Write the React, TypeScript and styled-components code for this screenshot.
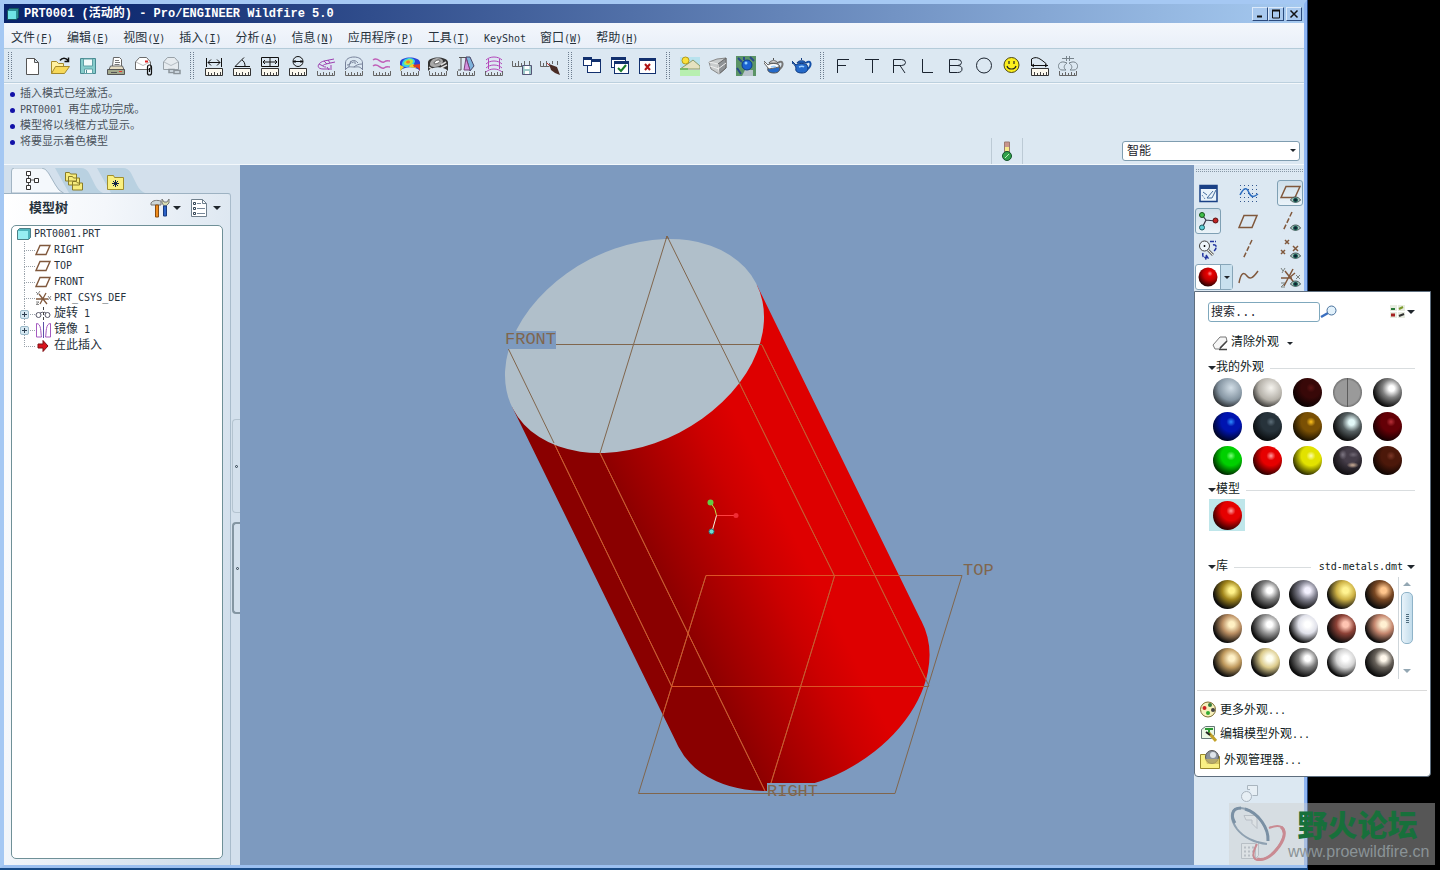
import React from "react";
import styled, { createGlobalStyle, css } from "styled-components";

const CJK = '"Liberation Mono", "Noto Sans CJK SC", monospace';
const MONO = '"DejaVu Sans Mono", "Noto Sans CJK SC", monospace';

const GlobalStyle = createGlobalStyle`
  *, *::before, *::after { box-sizing: border-box; }
  html, body { margin: 0; background: #000; }
  body { font: 12px/16px ${CJK}; color: #27323c; }
  button { font: inherit; color: inherit; background: none; border: 0; padding: 0; margin: 0; cursor: pointer; }
  svg { display: block; flex: none; }
  ul { list-style: none; margin: 0; padding: 0; }
`;

/* ---------- text ---------- */

const Latin = styled.span`
  font-family: ${MONO};
  font-size: 10px;
`;

function Mixed({ text }: { text: string }) {
  return (
    <>
      {text.split(/([\x20-\x7e]+)/).map((run, i) =>
        run === "" ? null : i % 2 ? <Latin key={i}>{run}</Latin> : <span key={i}>{run}</span>
      )}
    </>
  );
}

/* ---------- window frame ---------- */

const Desktop = styled.div`
  position: relative;
  display: flex;
  min-height: 100vh;
  padding-right: 132px;
  background: #000;
`;

const Frame = styled.main`
  flex: 1;
  min-width: 0;
  display: flex;
  border-right: 1px solid #23467e;
  border-bottom: 2px solid #174a86;
`;

const AppWindow = styled.div`
  flex: 1;
  min-width: 0;
  display: flex;
  flex-direction: column;
  border: 4px solid #a5c8f3;
  border-right: 3px solid #8db4f2;
  border-bottom: 3px solid #9cc0f0;
  background: #dce8f2;
`;

const TitleBar = styled.header`
  display: flex;
  align-items: center;
  height: 19px;
  padding: 0 2px 0 3px;
  background: linear-gradient(90deg, #0a246a 0%, #0f2a70 8%, #a6caf0 100%);
`;

const TitleText = styled.h1`
  flex: 1;
  margin: 0 0 0 5px;
  font: bold 12px/18px ${CJK};
  color: #fff;
  white-space: pre;
`;

const TitleButtons = styled.div`
  display: flex;
`;

const TitleButton = styled.button<{ $gap?: boolean }>`
  width: 16px;
  height: 14px;
  display: grid;
  place-items: center;
  margin-left: ${(p) => (p.$gap ? 2 : 0)}px;
  background: #a9c9ee;
  border: 1px solid #dceafa;
  border-right-color: #2b4a7c;
  border-bottom-color: #2b4a7c;
`;

const MenuBar = styled.nav`
  display: flex;
  gap: 14px;
  height: 26px;
  padding: 6px 7px 0;
  background: linear-gradient(#f3f7fc, #e9eff8);
  border-bottom: 1px solid #b4cbd9;
`;

const MenuButton = styled.button`
  display: flex;
  align-items: center;
  white-space: pre;
`;

const ToolBar = styled.div`
  display: flex;
  align-items: center;
  height: 34px;
  border-bottom: 1px solid #bcd0de;
  box-shadow: 0 1px 0 #f4f8fc;
`;

const Grip = styled.span`
  flex: none;
  width: 14px;
  height: 28px;
  background: conic-gradient(#6c7c8e 90deg, transparent 0) 3px 0 / 2px 2px repeat-y,
    conic-gradient(#6c7c8e 90deg, transparent 0) 6px 0 / 2px 2px repeat-y;
`;

const ToolButton = styled.button`
  width: 28px;
  height: 28px;
  display: grid;
  place-items: center;
`;

const MessageArea = styled.section`
  display: flex;
  align-items: flex-end;
  height: 82px;
  border-bottom: 1px solid #f3f8fc;
`;

const MessageList = styled.ul`
  flex: 1;
  align-self: flex-start;
  padding: 3px 0 0 6px;
  font-size: 11px;
  color: #4a535c;
`;

const Message = styled.li`
  display: flex;
  align-items: center;
  height: 16px;
  white-space: pre;
  &::before {
    content: "";
    width: 5px;
    height: 5px;
    margin-right: 5px;
    border-radius: 50%;
    background: #1212a8;
  }
`;

const StatusCell = styled.div`
  width: 32px;
  height: 26px;
  margin-right: 99px;
  display: grid;
  place-items: center;
  border-left: 1px solid #bccad5;
  border-right: 1px solid #bccad5;
`;

const FilterBox = styled.label`
  position: relative;
  width: 178px;
  margin: 0 4px 3px 0;
`;

const FilterSelect = styled.select`
  appearance: none;
  display: block;
  width: 100%;
  height: 20px;
  padding: 1px 4px 0;
  font: 12px/16px ${CJK};
  color: #1d242b;
  background: #fff;
  border: 1px solid #7f9db0;
  border-radius: 3px;
`;

const Caret = styled.span<{ $overlay?: boolean; $size?: number }>`
  flex: none;
  width: 0;
  height: 0;
  border: ${(p) => p.$size ?? 4}px solid transparent;
  border-top-color: #20262c;
  border-bottom: 0;
  ${(p) => p.$overlay && css`
    position: absolute;
    right: 4px;
    top: 8px;
    pointer-events: none;
  `}
`;

/* ---------- body: tree panel, viewport, tools ---------- */

const Body = styled.div`
  flex: 1;
  display: flex;
  min-height: 700px;
`;

const SidePanel = styled.aside`
  width: 236px;
  flex: none;
  display: flex;
  background: #d3e0ec;
`;

const SideMain = styled.div`
  flex: 1;
  display: flex;
  flex-direction: column;
`;

const Tabs = styled.div`
  display: flex;
  height: 28px;
  padding: 3px 0 0 7px;
`;

const Tab = styled.button<{ $active?: boolean }>`
  position: relative;
  width: 42px;
  height: 25px;
  z-index: ${(p) => (p.$active ? 1 : 0)};
  > svg:first-child {
    position: absolute;
    left: 0;
    top: 0;
  }
  > svg:last-child {
    position: absolute;
    left: ${(p) => (p.$active ? 9 : 11)}px;
    top: ${(p) => (p.$active ? 2 : 3)}px;
  }
`;

const TreePanel = styled.section`
  flex: 1;
  display: flex;
  flex-direction: column;
  padding: 0 7px 6px;
  border-top: 1px solid #9db2c2;
  border-right: 1px solid #a9bccb;
  border-top-right-radius: 3px;
  background: linear-gradient(100deg, #ffffff 0%, #f4f7fb 30%, #d0deeb 90%);
`;

const TreeHeader = styled.div`
  display: flex;
  align-items: center;
  height: 31px;
  padding: 0 2px 3px 18px;
`;

const TreeTitle = styled.h2`
  flex: 1;
  margin: 0;
  padding-top: 2px;
  font: bold 13px/18px ${CJK};
`;

const HeaderButton = styled.button`
  display: flex;
  align-items: center;
  gap: 3px;
  margin-left: 9px;
`;

const TreeBox = styled.div`
  flex: 1;
  padding: 0 7px 0 5px;
  background: #fff;
  border: 1px solid #6f9097;
  border-radius: 5px;
  white-space: pre;
`;

const TreeRoot = styled.div`
  display: flex;
  align-items: center;
  gap: 3px;
  height: 16px;
`;

const TreeItem = styled.li`
  position: relative;
  display: flex;
  align-items: center;
  height: 16px;
  padding-left: 18px;
  &::before {
    content: "";
    position: absolute;
    left: 7px;
    top: 0;
    width: 11px;
    height: 9px;
    border: 1px dotted #9aa3ab;
    border-width: 0 0 1px 1px;
  }
  &:not(:last-child)::after {
    content: "";
    position: absolute;
    left: 7px;
    top: 8px;
    height: 8px;
    border-left: 1px dotted #9aa3ab;
  }
  > svg { margin-right: 2px; }
`;

const Expander = styled.button`
  position: absolute;
  z-index: 1;
  left: 3px;
  top: 4px;
  width: 9px;
  height: 9px;
  background: linear-gradient(#2c3e50, #2c3e50) center / 5px 1px no-repeat,
    linear-gradient(#2c3e50, #2c3e50) center / 1px 5px no-repeat, #d6e8f2;
  border: 1px solid #9bbac9;
  border-radius: 2px;
`;

const Sash = styled.div`
  width: 9px;
  display: flex;
  flex-direction: column;
  align-items: flex-end;
  gap: 9px;
  padding-top: 254px;
`;

const SashButton = styled.button<{ $strong?: boolean }>`
  width: 8px;
  height: ${(p) => (p.$strong ? 92 : 94)}px;
  display: grid;
  place-items: center;
  border: ${(p) => (p.$strong ? "2px solid #8496a2" : "1px solid #b4c4d0")};
  border-right: 0;
  border-radius: 4px 0 0 4px;
  &::after {
    content: "";
    width: 3px;
    height: 3px;
    border: 1px solid #2f3f4c;
    border-radius: 50%;
  }
`;

const Viewport = styled.section`
  flex: 1;
  min-width: 0;
  display: flex;
  background: #7d9abf;
  > svg { width: 100%; height: 100%; flex: 1; }
`;

const ToolColumn = styled.aside`
  position: relative;
  width: 110px;
  flex: none;
  display: flex;
  flex-direction: column;
  padding: 4px 0 5px 1px;
  background: #dce8f2;
  &::before {
    content: "";
    flex: none;
    height: 3px;
    background: conic-gradient(#8797a6 90deg, transparent 0) 0 0 / 2px 2px;
  }
`;

const ToolGrid = styled.div`
  display: grid;
  grid-template-columns: 40px 42px 26px;
  grid-auto-rows: 28px;
  margin-top: 8px;
`;

const SideTool = styled.button<{ $on?: boolean }>`
  width: 26px;
  height: 26px;
  display: grid;
  place-items: center;
  border: 1px solid ${(p) => (p.$on ? "#7fa0b4" : "transparent")};
  border-radius: 3px;
  background: ${(p) => (p.$on ? "linear-gradient(#cfdfea, #eaf3f9)" : "none")};
`;

const SplitTool = styled.div`
  display: flex;
  width: 38px;
  height: 26px;
  border: 1px solid #86a5b8;
  border-radius: 3px;
  background: #fff;
  > button { flex: 1; display: grid; place-items: center; }
  > button:last-child { flex: none; width: 12px; background: #c8e0ee; border-left: 1px solid #86a5b8; }
`;

const DisabledTools = styled.div`
  display: flex;
  flex-direction: column;
  gap: 8px;
  align-items: center;
  margin-top: auto;
  opacity: 0.65;
`;

/* ---------- appearance popup ---------- */

const Popup = styled.section`
  position: absolute;
  z-index: 2;
  left: 0;
  top: 126px;
  width: 237px;
  padding: 10px 15px 3px 12px;
  background: #fff;
  border: 1px solid #5e6e7e;
  border-radius: 0 0 4px 4px;
  color: #111b22;
  white-space: pre;
`;

const SearchRow = styled.div`
  display: flex;
  align-items: center;
  height: 20px;
  padding-left: 1px;
`;

const SearchInput = styled.input`
  width: 112px;
  height: 20px;
  padding: 2px 2px 0;
  font: 12px/16px ${CJK};
  border: 1px solid #7fa8bd;
  border-radius: 3px;
  outline: 0;
  &::placeholder { color: #1d262d; opacity: 1; }
`;

const ViewButton = styled.button`
  display: flex;
  align-items: center;
  gap: 1px;
  margin-left: auto;
`;

const ClearButton = styled.button`
  display: flex;
  align-items: center;
  height: 20px;
  margin: 11px 0 8px 5px;
  gap: 2px;
  > span:last-child { margin-left: 6px; }
`;

const Heading = styled.h3`
  display: flex;
  align-items: center;
  height: 14px;
  margin: 0;
  padding-left: 1px;
  font: 12px/14px ${CJK};
`;

const Rule = styled.span`
  flex: 1;
  height: 1px;
  margin-left: 6px;
  background: #d9dddf;
`;

const LibraryButton = styled.button`
  display: flex;
  align-items: center;
  gap: 4px;
  margin-left: 8px;
`;

const Swatches = styled.div<{ $cell: number; $after?: number }>`
  display: grid;
  grid-template-columns: repeat(5, ${(p) => p.$cell}px);
  grid-auto-rows: 34px;
  place-items: center;
  padding-bottom: ${(p) => p.$after ?? 0}px;
`;

const SPHERE_FILL = {
  flat: (_: string, base: string) =>
    `linear-gradient(90deg, transparent 49%, #5c5c5c 49% 53%, transparent 53%), radial-gradient(circle 15px at 50% 50%, ${base} 80%, #666)`,
  metal: (hi: string, base: string) =>
    `radial-gradient(circle 20px at 64% 36%, ${hi} 0 14%, ${base} 46%, #0c0c0c 94%)`,
  gloss: (hi: string, base: string) =>
    `radial-gradient(circle 23px at 62% 34%, ${hi} 0, ${base} 20%, ${base} 42%, #000 96%)`,
  matte: (hi: string, base: string) =>
    `radial-gradient(circle 23px at 62% 34%, ${hi} 0, ${base} 54%, #0c0c0c 98%)`,
  marble: (hi: string, base: string) =>
    `radial-gradient(ellipse 6px 3px at 68% 66%, ${hi} 20%, transparent), radial-gradient(ellipse 4px 5px at 34% 30%, #77707c 10%, transparent), radial-gradient(ellipse 5px 3px at 70% 30%, #6c6470 10%, transparent), radial-gradient(circle 23px at 60% 34%, ${base} 30%, #000)`,
};

type Kind = keyof typeof SPHERE_FILL;

const Sphere = styled.button<{ $hi: string; $base: string; $kind?: Kind }>`
  width: 29px;
  height: 29px;
  border-radius: 50%;
  background: ${(p) => SPHERE_FILL[p.$kind ?? "gloss"](p.$hi, p.$base)};
`;

const ModelCell = styled.div`
  display: grid;
  place-items: center;
  width: 36px;
  height: 32px;
  margin: 2px 0 29px 2px;
  background: #bfe6ea;
`;

const Library = styled.div`
  display: flex;
  padding: 3px 0 0 1px;
`;

const Scroll = styled.div`
  display: flex;
  flex-direction: column;
  align-items: center;
  width: 19px;
  padding: 5px 0 6px;
  border-left: 1px solid #cfd6da;
`;

const ScrollThumb = styled.div`
  width: 12px;
  height: 52px;
  margin-top: 6px;
  display: grid;
  place-items: center;
  border: 1px solid #8fb3c8;
  border-radius: 5px;
  background: linear-gradient(90deg, #e8f3fa, #c2dceb);
  &::after {
    content: "";
    width: 3px;
    height: 9px;
    background: repeating-linear-gradient(#4e6c7e 0 1px, transparent 1px 2px);
  }
`;

const ScrollArrow = styled.button<{ $up?: boolean }>`
  border: 4px solid transparent;
  ${(p) => (p.$up ? "border-bottom-color: #93a7b3; border-top: 0;" : "border-top-color: #93a7b3; border-bottom: 0; margin-top: auto;")}
`;

const PopupMenu = styled.div`
  display: flex;
  flex-direction: column;
  margin: 11px -12px 0 -10px;
  padding-top: 6px;
  border-top: 1px solid #dadada;
`;

const PopupItem = styled.button<{ $tall?: boolean }>`
  display: flex;
  align-items: center;
  gap: ${(p) => (p.$tall ? 4 : 3)}px;
  height: ${(p) => (p.$tall ? 28 : 24)}px;
  padding-left: 3px;
  > span { padding-top: 3px; }
`;

/* ---------- watermark ---------- */

const Watermark = styled.a`
  position: absolute;
  z-index: 3;
  right: 5px;
  bottom: 5px;
  width: 206px;
  height: 62px;
  display: flex;
  background: rgba(205, 205, 205, 0.42);
  text-decoration: none;
  white-space: nowrap;
`;

const MarkText = styled.span`
  display: flex;
  flex-direction: column;
  align-items: flex-end;
  margin-left: -1px;
  font: 16px/18px "Liberation Sans", sans-serif;
  color: #8a9396;
  strong {
    font: 900 30px/40px "Noto Sans CJK SC", sans-serif;
    color: #17703b;
    padding-right: 12px;
  }
`;

/* ---------- icons ---------- */

const Icon = ({ children, size = 20, w, h }: { children: React.ReactNode; size?: number; w?: number; h?: number }) => (
  <svg width={w ?? size} height={h ?? size} viewBox={`0 0 ${w ?? size} ${h ?? size}`} fill="none" stroke="#111" strokeWidth="1" aria-hidden="true">
    {children}
  </svg>
);

const BoxRuler = () => (
  <g>
    <path d="M1.5 12.5h17v7h-17z" fill="#fbf8ee" stroke="#333" />
    <path d="M4.5 19v-3M7.5 19v-2M10.5 19v-3M13.5 19v-2M16.5 19v-3" stroke="#444" />
  </g>
);
const OpenRuler = () => <path d="M1.5 15v4.5h17V15M4.5 19v-2M7.5 19v-3M10.5 19v-2M13.5 19v-3M16.5 19v-2" stroke="#666" />;

const NewIcon = () => <Icon><path d="M4.5 2.5h8l4 4v12h-12zM12.5 2.5v4h4" fill="#fff" stroke="#555" /></Icon>;
const OpenIcon = () => (
  <Icon>
    <path d="M1.5 17.5v-12h5l2 2h5v3" fill="#fff0a0" stroke="#a58a2c" />
    <path d="M1.5 17.5l4-7h14l-5 7z" fill="#f7d95a" stroke="#a58a2c" />
    <path d="M10 4.5c2-3 6-3 8 0M18.5 1.5v4h-4" strokeWidth="1.5" />
  </Icon>
);
const SaveIcon = () => (
  <Icon>
    <path d="M2.5 2.5h15v15h-15z" fill="#86cdcc" stroke="#4a8a92" />
    <path d="M5.5 3h9v7h-9zM6.5 13h8v4.5h-8z" fill="#f3fbfb" stroke="#5fa0a5" />
    <path d="M8.5 14v3" stroke="#4a8a92" />
  </Icon>
);
const PrintIcon = () => (
  <Icon>
    <path d="M6.5 10l1-8.5h6l2 2V10" fill="#fff" stroke="#666" />
    <path d="M9 4.5h4M9 6.5h5M8.5 8.5h5" stroke="#777" />
    <path d="M2.5 15l2-5h12l2 5z" fill="#e5dcc2" stroke="#666" />
    <path d="M1.5 13.5h17v5h-17z" fill="#a2a88c" stroke="#555" />
    <path d="M5 16.5h6" stroke="#555" />
    <path d="M13 15.5h3" stroke="#e33" />
  </Icon>
);
const MailIcon = ({ dim }: { dim?: boolean }) => (
  <Icon>
    <path d="M1.5 13.5V6l4-4.5h7l4 4.5v7.5z" fill={dim ? "#e6ebef" : "#fff"} stroke={dim ? "#98a1a8" : "#6b6b6b"} />
    <path d="M2 6l7 3.5L16 6" stroke={dim ? "#b4bcc2" : "#bbb"} />
    {dim ? (
      <path d="M7 13.5h5v3H7zM12 14.5h6v3h-6z" stroke="#8b949b" strokeWidth="1.5" />
    ) : (
      <>
        <path d="M11 5.5h3" stroke="#d22" strokeWidth="2" />
        <path d="M13.5 18v-7a2 2 0 014 0v6a2 2 0 01-4 0M15.5 12v4" strokeWidth="1.2" />
      </>
    )}
  </Icon>
);
const DistanceIcon = () => <Icon><path d="M2.5 2v9M17.5 2v9M4 6.5h12M7 3.5l-3 3 3 3M13 3.5l3 3-3 3" /><BoxRuler /></Icon>;
const AngleIcon = () => <Icon><path d="M12 1.5L3 10.5h15M10 4c2 1 3 3.5 3 6" /><BoxRuler /></Icon>;
const AreaIcon = () => <Icon><path d="M1.5 1.5h17v9h-17zM10 2v9M3 6h14M5 4L3 6l2 2M15 4l2 2-2 2" /><BoxRuler /></Icon>;
const DiameterIcon = () => <Icon><circle cx="10" cy="5.5" r="5" /><path d="M5 5.5h10M7 4v3M13 4v3" /><BoxRuler /></Icon>;
const CurveIcon = () => (
  <Icon><path d="M18 3L8 5C1 7 0 13 7 13h7M19 6l-9 2c-4 1-4 3 0 3M8 5l3 3M3 8l4 2M12 4l2 3M11 11l2 3M15 9v5" stroke="#9d3fb0" /><OpenRuler /></Icon>
);
const SectionIcon = () => (
  <Icon><path d="M1.5 14V7c0-4 4-6 8.500-6s8.500 2 8.500 6v7M2 13c3-3 4-2 8-2s5-1 8 2M5 11c0-6 5-9 9-4M10 11c2-2 5-3 8-3M6 5c2 1 1 4-3 4M8 7c2-2 4-1 3 1" stroke="#77829a" /><OpenRuler /></Icon>
);
const WavesIcon = () => <Icon><path d="M1 4c5-4 7 4 11 2 3-2 4-1 6-1M1 10c5-4 7 4 11 2 3-2 4-1 6-1" stroke="#c05fb8" strokeWidth="1.5" /><OpenRuler /></Icon>;
const ColorMapIcon = () => (
  <Icon>
    <path d="M0 15V6c1-6 19-6 20 0v9c-4-5-16-5-20 0z" fill="#2a42d8" stroke="none" />
    <path d="M2 8c0-7 12-8 13-3 0 3-4 6-8 6s-5-1-5-3z" fill="#35d2e4" stroke="none" />
    <path d="M4 7c1-4 9-5 9-2s-3 4-5 4-4 0-4-2z" fill="#b9e845" stroke="none" />
    <path d="M6 6c1-2 4-2 4 0s-4 2-4 0z" fill="#f08020" stroke="none" />
    <path d="M9 11c2-4 6-4 7 1zM0 9l4 2-4 4z" fill="#f3d32c" stroke="none" />
    <path d="M13 9l7-1v7c-1-3-3-4-6-4z" fill="#e03c20" stroke="none" />
    <OpenRuler />
  </Icon>
);
const ReflectIcon = () => (
  <Icon>
    <path d="M0 15V6c1-6 19-6 20 0v9c-4-5-16-5-20 0z" fill="#333" stroke="none" />
    <path d="M2 8c0-7 12-8 13-3 0 3-4 6-8 6s-5-1-5-3z" fill="#a9a9a9" stroke="none" />
    <path d="M6 7c1-3 6-4 6-2s-6 4-6 2z" fill="#fff" stroke="#555" />
    <path d="M13 9l5-3M13 12l6-3M1 11l3 2" stroke="#ddd" strokeWidth="1.5" />
    <OpenRuler />
  </Icon>
);
const PrismIcon = () => (
  <Icon>
    <path d="M3 1.5h9M5 2v12H2" stroke="#555" />
    <path d="M10 1h4l4 9-4 5z" fill="#7fb3dc" stroke="#446" />
    <path d="M10 2l-2 12h6z" fill="#d58fe0" stroke="#747" />
    <OpenRuler />
  </Icon>
);
const ContoursIcon = () => (
  <Icon><path d="M2 4c4-4 12-4 16 0M2 8c4-4 12-4 16 0M2 12c4-4 12-4 16 0M2 16c4-4 12-4 16 0M4.5 3v10M15.5 3v10" stroke="#b347ba" /><OpenRuler /></Icon>
);
const RulerSaveIcon = () => (
  <Icon><path d="M.5 5v5.5h13M3.5 10V7M6.5 10V5M9.5 10V7M12.5 10V5M17.5 5v5" stroke="#666" /><path d="M10.5 9.5h9v9h-9z" fill="#9cc9c9" stroke="#557" /><path d="M12.5 10h5v3h-5zM13 15h4v3h-4z" fill="#fff" stroke="none" /></Icon>
);
const RulerHideIcon = () => (
  <Icon><path d="M.5 5v5.5h9M3.5 10V7M6.5 10V5M9.5 8V7M12.5 8V5M17.5 5v4" stroke="#666" /><path d="M7 7l6 6" stroke="#c33" /><path d="M9 8l8 3 3 8-5-2-4-3z" fill="#4a2c25" stroke="none" /></Icon>
);
const Win = ({ x, y, w, h, t = 3 }: { x: number; y: number; w: number; h: number; t?: number }) => (
  <g stroke="none"><path d={`M${x} ${y}h${w}v${h}h${-w}z`} fill="#12306e" /><path d={`M${x + 1} ${y + t}h${w - 2}v${h - t - 1}h${2 - w}z`} fill="#fff" /></g>
);
const NewWindowIcon = () => <Icon><Win x={5} y={3} w={14} h={14} /><Win x={1} y={1} w={9} h={9} /></Icon>;
const ActivateIcon = () => <Icon><Win x={1} y={1} w={15} h={11} /><Win x={4} y={5} w={15} h={13} /><path d="M8 12l3 3 5-6" stroke="#197a2a" strokeWidth="2" /></Icon>;
const CloseWindowIcon = () => <Icon><Win x={1} y={2} w={17} h={16} /><path d="M7 8l5 6M12 8l-5 6" stroke="#b01515" strokeWidth="2" /></Icon>;
const SceneIcon = () => (
  <Icon>
    <path d="M0 1h20v10H0z" fill="#b8e2ee" stroke="none" />
    <path d="M0 13l9-6 4-3 7 6v3H0z" fill="#e6e2c0" stroke="#8a9a6a" />
    <circle cx="5.5" cy="4.5" r="3.5" fill="#fbe13c" stroke="#b59a1c" />
    <path d="M0 12h8v2H0z" fill="#7ab86a" stroke="none" />
    <path d="M0 14h20v6H0z" fill="#b8efb0" stroke="none" />
  </Icon>
);
const CubeIcon = () => (
  <Icon><path d="M1 6l8-3 9-1v10l-7 6-8-5z" fill="#c9cccd" stroke="#888" /><path d="M10 8l8-6v10l-7 6z" fill="#8f9396" stroke="#666" /><path d="M1 6l9 2 1 10M10 13l8-6M2 10l9 3" stroke="#eee" /></Icon>
);
const GlobeIcon = () => (
  <Icon><path d="M0 0h20v20H0z" fill="#5b9466" stroke="none" /><path d="M2 2l4 4M14 1l4 4M1 12l4 6M8 1v3" stroke="#2b4a8a" strokeWidth="2" /><path d="M9 14h8v6H6z" fill="#b9c4cc" stroke="none" /><circle cx="11" cy="9" r="5" fill="#1c63d2" stroke="#0b3b8d" /><circle cx="10" cy="7" r="1.5" fill="#8fd2ff" stroke="none" /></Icon>
);
const Teapot = ({ light }: { light?: boolean }) => (
  <Icon>
    <path d="M14 7c5-4 7 3 0 7" stroke={light ? "#777" : "#1350a8"} strokeWidth="2" />
    <path d="M0 5l4 4c2-2 9-2 11 0 2 5 0 8-5 8S3 15 4 12C3 9 2 8 0 7z" fill="#2469c9" stroke={light ? "#555" : "#123c80"} />
    {light && <path d="M0 5l4 4c2-2 9-2 11 0v2L5 13 0 7z" fill="#fff" stroke="#666" />}
    <path d="M5 7c1-3 8-3 9 0zM9.5 4V2" fill={light ? "#fff" : "#2469c9"} stroke={light ? "#555" : "#123c80"} />
    <path d="M7 11c2-1 4-1 5 0" stroke="#9fd0ff" strokeWidth="1.5" />
  </Icon>
);
const StrokeGlyph = ({ d }: { d: string }) => <Icon><path d={d} stroke="#1b2430" /></Icon>;
const SmileIcon = () => (
  <Icon><circle cx="9.5" cy="9" r="7.5" fill="#fbee1d" stroke="#4a4510" /><path d="M7 5v3M12 5v3M5 10c1 4 8 4 9 0" stroke="#222" strokeWidth="1.2" /></Icon>
);
const ArcRulerIcon = () => <Icon><path d="M1.5 9V3c5-3 8-1 15 5M1 9.5h17M4 8L2 9.500 4 11M15 8l2 1.500-2 1.500" /><BoxRuler /></Icon>;
const ClearanceIcon = () => (
  <Icon><path d="M4 2.5h12M8.5 0v5M11.5 0v5M6 6C-1 5-1 14 4 14h4c-3-2-2-5 1-7zM14 6c7-1 7 8 2 8h-4c3-2 2-5-1-7z" stroke="#77838c" /><OpenRuler /></Icon>
);

const Eye = () => (
  <g><path d="M10.5 17c2-4 8-4 10 0-2 3-8 3-10 0z" fill="#a9c4bd" stroke="#4a5a5a" /><circle cx="15.5" cy="17" r="2" fill="#123" stroke="#1b6a5a" /></g>
);
const BR = "#80583c";
const PlaneIcon = ({ eye }: { eye?: boolean }) => <Icon w={21} h={21}><path d={eye ? "M6 3.5h14l-5 11H1z" : "M6 4.5h13l-5 12H1z"} stroke={BR} strokeWidth="1.5" />{eye && <Eye />}</Icon>;
const AxisIcon = ({ eye }: { eye?: boolean }) => <Icon w={21} h={21}><path d={eye ? "M12 1L3 20" : "M14 1L5 20"} stroke={BR} strokeWidth="1.5" strokeDasharray="5 2" />{eye && <Eye />}</Icon>;
const PointsIcon = () => <Icon w={21} h={21}><path d="M5 1l4 4M9 1L5 5M13 7l5 5M18 7l-5 5M1 11l4 4M5 11l-4 4" stroke={BR} strokeWidth="1.5" /><Eye /></Icon>;
const CsysIcon = () => <Icon w={21} h={21}><path d="M1 11h11M13 2L4 19M5 4l11 14M9 11l6-5" stroke={BR} strokeWidth="1.5" /><path d="M1 1l2 3M5 1L2 6M16 8l4 4M20 8l-4 4M1 16h4l-4 4h4" stroke="#7b827f" /><Eye /></Icon>;
const CurveToolIcon = () => <Icon w={21} h={21}><path d="M1 16C3 5 6 5 9 9s6 2 11-5" stroke={BR} strokeWidth="1.5" /></Icon>;
const SketchIcon = () => <Icon w={21} h={21}><path d="M2 2.5h17v16H2z" fill="#e9f3fb" stroke="#1a4186" strokeWidth="1.5" /><path d="M2 3h17v3H2z" fill="#1a4186" stroke="none" /><path d="M5 9l4 3M15 8l-6 7h5l4-8" stroke="#446c9c" /><path d="M4 12l3 4" stroke="#446c9c" strokeDasharray="1 1" /></Icon>;
const SplineGridIcon = () => (
  <Icon w={21} h={21}><path d="M2 2.5h17M2 6.5h17M2 10.5h17M2 14.5h17M2 18.5h17" stroke="#345890" strokeDasharray="1 3" /><path d="M2 12c4-8 7-8 9-2 3 5 5 4 9 1" stroke="#2f6fc0" strokeWidth="1.5" /></Icon>
);
const SpinIcon = () => (
  <Icon w={21} h={21}><path d="M8 9l9 1M8 9L4 4M8 9l-4 8" stroke="#334" strokeWidth="1.2" /><circle cx="4" cy="4" r="2.5" fill="#3fc04a" stroke="#17521c" /><circle cx="17.5" cy="9.5" r="2.5" fill="#c02424" stroke="#5a1010" /><circle cx="4" cy="16.5" r="2.5" fill="#5fd0d8" stroke="#1c5a60" /></Icon>
);
const RefitIcon = () => (
  <Icon w={21} h={21}><circle cx="6.5" cy="7" r="5" fill="#eef6fb" stroke="#444" /><path d="M6.5 6v2M5.5 7h2" /><path d="M10 11l5 5" stroke="#777" strokeWidth="3" /><path d="M10 11l5 5" stroke="#eed" /><path d="M12 2.5h6M15 6c4-1 4 4 1 6M5 14c-1 4 1 5 4 4M8 16l2 3-3 1" stroke="#2134a0" strokeWidth="1.5" strokeDasharray="4 1" /></Icon>
);

const TabShape = ({ active }: { active?: boolean }) => (
  <svg width="56" height="25" viewBox="0 0 56 25" aria-hidden="true">
    <path d={active ? "M.5 25V3q0-3 3-3h27q4 0 7 5l7 12q3 6 8 8z" : "M2 0h26q5 0 8 5l6 12q3 6 8 8H16z"} fill={active ? "#f4f8fc" : "#b9d1e1"} stroke={active ? "#a2b5c4" : "none"} />
  </svg>
);
const TreeTabIcon = () => <Icon><path d="M8.5 3v14M9 10h9" stroke="#555" /><path d="M6.5 1.5h4v4h-4zM6.5 8.5h4v4h-4zM6.5 15.5h4v4h-4zM14.5 8.5h4v4h-4z" fill="#fff" stroke="#333" /></Icon>;
const LayersIcon = () => <Icon><path d="M1.5 1.5h4l1 1.500h6v7h-11zM4.500 5.500h4l1 1.500h6v7h-11zM8.500 10.500h4l1 1.500h5v7h-10z" fill="#f7ec7c" stroke="#8a7c28" /></Icon>;
const FavIcon = () => <Icon><path d="M1.5 4.5h6l1 2h9v12h-16z" fill="#faf080" stroke="#a08e2c" /><path d="M9.5 9v7M6 12.5h7M7 10l5 5M12 10l-5 5" stroke="#124" /></Icon>;
const HammerIcon = () => (
  <Icon><path d="M1 5c2-3 6-3 10-2v4H8L1 7z" fill="#cdd6d8" stroke="#777" /><path d="M5.5 7h3v12h-3z" fill="#ef8d1e" stroke="#8a4c10" /><path d="M12 1v4l2 3h2l3-3V1l-2 3h-3z" fill="#d8dcb0" stroke="#777" /><path d="M13.5 8h3v10h-3z" fill="#2c62c8" stroke="#173a80" /></Icon>
);
const ListIcon = () => (
  <Icon><path d="M1.5 1.5h11l4 4v13h-15z" fill="#fff" stroke="#6f7f8c" /><path d="M12.5 1.5v4h4" stroke="#6f7f8c" /><path d="M7 5.5h4M7 10.5h8M7 15.5h8" stroke="#789" /><path d="M3.5 4.5h2v2h-2zM3.5 9.5h2v2h-2zM3.5 14.5h2v2h-2z" stroke="#345" /></Icon>
);
const PartIcon = () => <Icon w={14} h={14}><path d="M.5 3.5l2-2h11v9l-2 2H.5z" fill="#4fb4bc" stroke="#4c7f86" /><path d="M1 4h10v8H1z" fill="#96eef2" stroke="none" /></Icon>;
const TreePlane = () => <Icon w={17} h={14}><path d="M5 2.5h10l-4 9H1z" stroke={BR} strokeWidth="1.4" /></Icon>;
const TreeCsys = () => <Icon w={17} h={14}><path d="M1 8h12M11 2L5 13M4 3l8 10" stroke={BR} strokeWidth="1.3" /><path d="M1 1l2 2M5 0L2 4M13 5l3 4M16 5l-3 4M1 11h3l-3 2.5h3" stroke="#888" /></Icon>;
const TreeRevolve = () => <Icon w={17} h={14}><circle cx="3.5" cy="8" r="2.5" stroke="#556" /><circle cx="12.5" cy="8" r="2.5" stroke="#556" /><path d="M5 6l3-1M11 6L9 5" stroke="#667" /><path d="M8.5 0v14" strokeDasharray="3 2" stroke="#444" /></Icon>;
const TreeMirror = () => <Icon w={17} h={16}><path d="M1.5 15V1.5c5 0 4 9 5 13.5zM15.5 15V1.5c-5 0-4 9-5 13.5z" stroke="#a45ac0" /><path d="M8.5 0v16" stroke="#5a4fa8" /></Icon>;
const TreeInsert = () => <Icon w={17} h={14}><path d="M3 5h5V1.5l5 5.500-5 5.500V9H3z" fill="#d8131c" stroke="#7c1014" /></Icon>;

const TrafficIcon = () => <Icon w={12} h={20}><path d="M3.5 1h5v10h-5z" fill="#c8948c" stroke="#9a7a70" /><path d="M4 6h4v4H4z" fill="#f5ea8a" stroke="none" /><circle cx="6" cy="15" r="4.5" fill="#31a04a" stroke="#14522a" /><path d="M4 17l4-4" stroke="#bdf0b8" /></Icon>;
const SearchIcon = () => <Icon w={18} h={14}><path d="M1 12l7-4" stroke="#3a6fc0" strokeWidth="2.5" /><circle cx="11.5" cy="5.5" r="4.5" fill="#e2f1fb" stroke="#47709c" /></Icon>;
const ThumbsIcon = () => (
  <Icon w={16} h={14}><path d="M0 0h7v6H0zM8 0h7v6H8zM0 7h7v6H0zM8 7h7v6H8z" fill="#e7ece0" stroke="none" /><path d="M1 4h4" stroke="#2a7a3a" strokeWidth="2" /><path d="M9 4l4-2" stroke="#7c9a2a" strokeWidth="2" /><path d="M1 10h4" stroke="#a52222" strokeWidth="3" /><path d="M9 11l5-2" stroke="#333" strokeWidth="2" /></Icon>
);
const EraserIcon = () => <Icon w={17} h={15}><path d="M1 9l7-8h6l1 4-7 8H3z" fill="#f6f6f6" stroke="#777" /><path d="M8 12l7-7M7 13.5h8" stroke="#444" strokeWidth="1.5" /></Icon>;
const PaletteIcon = () => (
  <Icon w={17} h={17}><circle cx="8" cy="8.5" r="7.5" fill="#f6f0bb" stroke="#7c6d2f" /><circle cx="4.5" cy="7" r="2" fill="#c22" stroke="none" /><circle cx="10" cy="4" r="2" fill="#347a3a" stroke="none" /><circle cx="13" cy="9" r="2" fill="#444" stroke="none" /><circle cx="8" cy="12" r="2" fill="#3a3" stroke="none" /></Icon>
);
const EditModelIcon = () => <Icon w={17} h={17}><path d="M1.5 4.5l4-3h9v8l-3 4h-10z" fill="#eaf7e4" stroke="#677" /><path d="M5 4h8M9 4v6" stroke="#2c9a34" strokeWidth="2" /><path d="M9 8l7 8" stroke="#c3a22a" strokeWidth="3" /><path d="M6 7l4 3" stroke="#222" strokeWidth="2" /></Icon>;
const ManagerIcon = () => <Icon w={20} h={19}><path d="M.5 4.5h5l2 2h12v12H.5z" fill="#faf184" stroke="#9a8a2c" /><circle cx="12" cy="7" r="6.5" fill="#8a929b" stroke="#555" /><circle cx="13" cy="5" r="3" fill="#dfe5ea" stroke="none" /><path d="M5 9h14v5H7z" fill="#c6b45c" stroke="none" opacity=".7" /></Icon>;

const MergeIcon = () => <Icon><path d="M7.5 1.5h10v10h-5M10 5.5H7.5v-4" fill="#eef3f7" stroke="#8f9aa5" /><circle cx="6.5" cy="12.5" r="5" fill="#eef3f7" stroke="#8f9aa5" /></Icon>;
const TrimIcon = () => <Icon><path d="M4 3.5h13v13l-5-5V8H6z" fill="#eef3f7" stroke="#8f9aa5" /></Icon>;
const PatternIcon = () => <Icon><path d="M1.5 3.5h14v15h-14zM15.5 3.5l3-2v14l-3 3" fill="#eef3f7" stroke="#8f9aa5" /><path d="M4 7.5h10M4 11.5h10M4 15.5h10" stroke="#8f9aa5" strokeWidth="2" strokeDasharray="2 2" /></Icon>;

/* ---------- data ---------- */

const MENUS: [string, string?][] = [
  ["文件", "F"], ["编辑", "E"], ["视图", "V"], ["插入", "I"], ["分析", "A"], ["信息", "N"],
  ["应用程序", "P"], ["工具", "T"], ["KeyShot"], ["窗口", "W"], ["帮助", "H"],
];

const TOOL_GROUPS: [string, React.ReactNode][][] = [
  [["新建", <NewIcon />], ["打开", <OpenIcon />], ["保存", <SaveIcon />], ["打印", <PrintIcon />], ["发送附件", <MailIcon />], ["发送链接", <MailIcon dim />]],
  [
    ["距离", <DistanceIcon />], ["角度", <AngleIcon />], ["区域", <AreaIcon />], ["直径", <DiameterIcon />], ["曲率", <CurveIcon />],
    ["截面", <SectionIcon />], ["偏移", <WavesIcon />], ["着色曲率", <ColorMapIcon />], ["反射", <ReflectIcon />], ["拔模", <PrismIcon />],
    ["斜率", <ContoursIcon />], ["保存分析", <RulerSaveIcon />], ["隐藏分析", <RulerHideIcon />],
  ],
  [["新窗口", <NewWindowIcon />], ["激活", <ActivateIcon />], ["关闭窗口", <CloseWindowIcon />]],
  [["场景", <SceneIcon />], ["透视", <CubeIcon />], ["环境", <GlobeIcon />], ["渲染设置", <Teapot light />], ["渲染", <Teapot />]],
  [
    ["前", <StrokeGlyph d="M3.5 17V3.5H15M3.5 9.5H12" />],
    ["上", <StrokeGlyph d="M3 3.5h14M10.5 3.5V17" />],
    ["右", <StrokeGlyph d="M3.5 17V3.5h8q4 0 4 3t-4 3h-8M10 9.5l5 7.500" />],
    ["左", <StrokeGlyph d="M4.5 3v13.5H15" />],
    ["后", <StrokeGlyph d="M3.5 3.5h8q4 0 4 3t-4 3h-8M11 9.5q5 0 5 3.5t-4.5 3.5h-8v-13" />],
    ["圆", <StrokeGlyph d="M10 2a7.5 7.5 0 100 15 7.5 7.5 0 100-15z" />],
    ["表情", <SmileIcon />], ["弧长", <ArcRulerIcon />], ["间隙", <ClearanceIcon />],
  ],
];

const MESSAGES = ["插入模式已经激活。", "PRT0001 再生成功完成。", "模型将以线框方式显示。", "将要显示着色模型"];

const TREE: { icon: React.ReactNode; label: string; expand?: boolean }[] = [
  { icon: <TreePlane />, label: "RIGHT" },
  { icon: <TreePlane />, label: "TOP" },
  { icon: <TreePlane />, label: "FRONT" },
  { icon: <TreeCsys />, label: "PRT_CSYS_DEF" },
  { icon: <TreeRevolve />, label: "旋转 1", expand: true },
  { icon: <TreeMirror />, label: "镜像 1", expand: true },
  { icon: <TreeInsert />, label: "在此插入" },
];

type Finish = [string, string, Kind?];
const MINE: Finish[] = [
  ["#d3dfe8", "#8595a2", "matte"], ["#f6f4ef", "#b4b0a8", "matte"], ["#5c1414", "#380808"], ["#999", "#9a9a9a", "flat"], ["#ffffff", "#808080", "metal"],
  ["#2d8cff", "#0014b0"], ["#5c6d78", "#27333b"], ["#ffc21c", "#7a5004"], ["#e2f8f8", "#566062", "metal"], ["#b83038", "#640006"],
  ["#7dff7d", "#00d000"], ["#ffa0a0", "#e60000"], ["#ffffb0", "#e2e200"], ["#b39a88", "#463e4a", "marble"], ["#7c3828", "#4c180a"],
];
const METALS: Finish[] = [
  ["#fff28a", "#a3871c", "metal"], ["#ffffff", "#7f7f7f", "metal"], ["#f3f1ff", "#80808e", "metal"], ["#fff391", "#cdb145", "metal"], ["#ffc58c", "#7a4823", "metal"],
  ["#fff0c4", "#bb8f63", "metal"], ["#ffffff", "#989898", "metal"], ["#ffffff", "#e0e1ea", "metal"], ["#ffc4b2", "#8d4237", "metal"], ["#fff0d2", "#c4866e", "metal"],
  ["#fff1c8", "#c09a5e", "metal"], ["#fffff0", "#dccb8c", "metal"], ["#ffffff", "#7d7d7d", "metal"], ["#ffffff", "#d3d3d3", "metal"], ["#fff8ec", "#666059", "metal"],
];

/* ---------- 3D scene ---------- */

const SIDE = "M512.3 407.3L677.8 745.3L922.2 622.7L756.7 284.7Z";
const DATUM =
  "M506 344.5H762M667 236L600 453L765 791M667 236L834.5 576L771 783M507 346L671.5 686M762 345L929 686M671.5 686.5H929M706 575.5H962L895 793.5H638.5Z";

const Cap = ({ cx, cy, fill }: { cx: number; cy: number; fill?: string }) => (
  <ellipse cx={cx} cy={cy} rx="136.8" ry="97.5" transform={`rotate(-27.3 ${cx} ${cy})`} fill={fill} />
);

function Scene() {
  return (
    <svg viewBox="240 165 954 700" role="img" aria-label="PRT0001">
      <defs>
        <linearGradient id="shade" gradientUnits="userSpaceOnUse" x1="512.3" y1="407.3" x2="758.1" y2="287.3">
          <stop offset="0" stopColor="#8a0000" />
          <stop offset=".2" stopColor="#8a0000" />
          <stop offset=".58" stopColor="#cc0000" />
          <stop offset=".72" stopColor="#de0000" />
          <stop offset="1" stopColor="#de0000" />
        </linearGradient>
        <clipPath id="body">
          <path d={SIDE} />
          <Cap cx={800} cy={684} />
        </clipPath>
      </defs>
      <rect x="500" y="230" width="440" height="570" fill="url(#shade)" clipPath="url(#body)" />
      <path d={DATUM} fill="none" stroke="#80664d" />
      <path d={DATUM} fill="none" stroke="#dc5426" clipPath="url(#body)" />
      <Cap cx={634.5} cy={346} fill="#b0bfca" />
      <path d="M506 344.5H762M667 236L600 453M667 236L740 384M507 346L554 443" fill="none" stroke="#80664d" />
      <rect x="505" y="331" width="51" height="18" fill="#7d9abf" />
      <rect x="767" y="783" width="51" height="10" fill="#7d9abf" />
      <g fill="#80664d" fontFamily="Liberation Mono, monospace" fontSize="17">
        <text x="505" y="344">FRONT</text>
        <text x="963" y="575">TOP</text>
        <text x="767" y="796">RIGHT</text>
      </g>
      <g fill="none">
        <path d="M716.5 515.5H736" stroke="#ff4040" />
        <path d="M711 503q5 6 5.500 12.500" stroke="#b6e04a" />
        <path d="M716.5 515.5l-4.500 16" stroke="#f4f4e0" />
      </g>
      <circle cx="710.5" cy="502.5" r="3" fill="#62cc44" />
      <circle cx="736" cy="515.5" r="2.5" fill="#f02c34" />
      <circle cx="711.5" cy="531.5" r="2.5" fill="#70dcd0" stroke="#2b7c80" />
    </svg>
  );
}

/* ---------- page ---------- */

const Balls = ({ items }: { items: Finish[] }) => (
  <>
    {items.map(([hi, base, kind], i) => (
      <Sphere key={i} type="button" aria-label={`外观 ${i + 1}`} $hi={hi} $base={base} $kind={kind} />
    ))}
  </>
);

function AppearancePopup() {
  return (
    <Popup aria-label="外观库">
      <SearchRow>
        <SearchInput type="text" placeholder="搜索..." aria-label="搜索" />
        <button type="button" aria-label="查找"><SearchIcon /></button>
        <ViewButton type="button" aria-label="视图选项"><ThumbsIcon /><Caret /></ViewButton>
      </SearchRow>
      <ClearButton type="button"><EraserIcon /><span>清除外观</span><Caret $size={3} /></ClearButton>
      <Heading><Caret />我的外观<Rule /></Heading>
      <Swatches $cell={40} $after={6}><Balls items={MINE} /></Swatches>
      <Heading><Caret />模型<Rule /></Heading>
      <ModelCell><Sphere type="button" aria-label="当前外观" $hi="#ffa0a0" $base="#e60000" /></ModelCell>
      <Heading>
        <Caret />库<Rule />
        <LibraryButton type="button"><Mixed text="std-metals.dmt" /><Caret /></LibraryButton>
      </Heading>
      <Library>
        <Swatches $cell={38}><Balls items={METALS} /></Swatches>
        <Scroll>
          <ScrollArrow $up type="button" aria-label="向上滚动" />
          <ScrollThumb />
          <ScrollArrow type="button" aria-label="向下滚动" />
        </Scroll>
      </Library>
      <PopupMenu>
        <PopupItem type="button"><PaletteIcon /><span><Mixed text="更多外观..." /></span></PopupItem>
        <PopupItem type="button"><EditModelIcon /><span><Mixed text="编辑模型外观..." /></span></PopupItem>
        <PopupItem type="button" $tall><ManagerIcon /><span><Mixed text="外观管理器..." /></span></PopupItem>
      </PopupMenu>
    </Popup>
  );
}

export default function App() {
  return (
    <Desktop>
      <GlobalStyle />
      <Frame>
        <AppWindow>
          <TitleBar>
            <Icon w={12} h={12}><path d="M.5 2.5l2-2h9v9l-2 2h-9z" fill="#2c8f96" stroke="#16585e" /><path d="M1 3h8v8H1z" fill="#6fe3e6" stroke="none" /></Icon>
            <TitleText>PRT0001 (活动的) - Pro/ENGINEER Wildfire 5.0</TitleText>
            <TitleButtons>
              <TitleButton type="button" aria-label="最小化"><Icon size={10}><path d="M2 7.5h5" strokeWidth="2" /></Icon></TitleButton>
              <TitleButton type="button" aria-label="最大化"><Icon size={10}><path d="M1 1.5h8" strokeWidth="2" /><path d="M1.5 1v8h7V1" /></Icon></TitleButton>
              <TitleButton type="button" aria-label="关闭" $gap><Icon size={10}><path d="M1.5 1.5l7 7M8.5 1.5l-7 7" strokeWidth="1.5" /></Icon></TitleButton>
            </TitleButtons>
          </TitleBar>
          <MenuBar>
            {MENUS.map(([name, key]) => (
              <MenuButton key={name} type="button">
                <Mixed text={name} />
                {key && <Latin>(<u>{key}</u>)</Latin>}
              </MenuButton>
            ))}
          </MenuBar>
          <ToolBar>
            {TOOL_GROUPS.map((group, i) => (
              <React.Fragment key={i}>
                <Grip />
                {group.map(([label, icon]) => <ToolButton key={label} type="button" aria-label={label}>{icon}</ToolButton>)}
              </React.Fragment>
            ))}
          </ToolBar>
          <MessageArea>
            <MessageList>
              {MESSAGES.map((m) => <Message key={m}><Mixed text={m} /></Message>)}
            </MessageList>
            <StatusCell><TrafficIcon /></StatusCell>
            <FilterBox>
              <FilterSelect aria-label="选择过滤器" defaultValue="智能">
                <option>智能</option>
                <option>几何</option>
                <option>基准</option>
              </FilterSelect>
              <Caret $overlay $size={3} />
            </FilterBox>
          </MessageArea>
          <Body>
            <SidePanel>
              <SideMain>
                <Tabs>
                  <Tab type="button" $active aria-label="模型树"><TabShape active /><TreeTabIcon /></Tab>
                  <Tab type="button" aria-label="层"><TabShape /><LayersIcon /></Tab>
                  <Tab type="button" aria-label="收藏夹"><TabShape /><FavIcon /></Tab>
                </Tabs>
                <TreePanel>
                  <TreeHeader>
                    <TreeTitle>模型树</TreeTitle>
                    <HeaderButton type="button" aria-label="设置"><HammerIcon /><Caret /></HeaderButton>
                    <HeaderButton type="button" aria-label="显示"><ListIcon /><Caret /></HeaderButton>
                  </TreeHeader>
                  <TreeBox>
                    <TreeRoot><PartIcon /><Mixed text="PRT0001.PRT" /></TreeRoot>
                    <ul>
                      {TREE.map((t) => (
                        <TreeItem key={t.label}>
                          {t.expand && <Expander type="button" aria-label="展开" />}
                          {t.icon}
                          <Mixed text={t.label} />
                        </TreeItem>
                      ))}
                    </ul>
                  </TreeBox>
                </TreePanel>
              </SideMain>
              <Sash>
                <SashButton type="button" aria-label="折叠面板" />
                <SashButton type="button" aria-label="展开面板" $strong />
              </Sash>
            </SidePanel>
            <Viewport><Scene /></Viewport>
            <ToolColumn>
              <ToolGrid>
                <SideTool type="button" aria-label="草绘"><SketchIcon /></SideTool>
                <SideTool type="button" aria-label="样条"><SplineGridIcon /></SideTool>
                <SideTool type="button" aria-label="平面显示" $on><PlaneIcon eye /></SideTool>
                <SideTool type="button" aria-label="旋转中心" $on><SpinIcon /></SideTool>
                <SideTool type="button" aria-label="基准平面"><PlaneIcon /></SideTool>
                <SideTool type="button" aria-label="轴显示"><AxisIcon eye /></SideTool>
                <SideTool type="button" aria-label="重新调整"><RefitIcon /></SideTool>
                <SideTool type="button" aria-label="基准轴"><AxisIcon /></SideTool>
                <SideTool type="button" aria-label="点显示"><PointsIcon /></SideTool>
                <SplitTool>
                  <button type="button" aria-label="外观">
                    <svg width="20" height="20" viewBox="0 0 20 20" aria-hidden="true">
                      <defs>
                        <radialGradient id="ball" cx=".6" cy=".32" r=".7">
                          <stop offset="0" stopColor="#ff8a8a" /><stop offset=".2" stopColor="#e80000" /><stop offset=".5" stopColor="#c00000" /><stop offset="1" stopColor="#200" />
                        </radialGradient>
                      </defs>
                      <circle cx="10" cy="10" r="9.5" fill="url(#ball)" />
                    </svg>
                  </button>
                  <button type="button" aria-label="外观列表"><Caret $size={3} /></button>
                </SplitTool>
                <SideTool type="button" aria-label="基准曲线"><CurveToolIcon /></SideTool>
                <SideTool type="button" aria-label="坐标系显示"><CsysIcon /></SideTool>
              </ToolGrid>
              <AppearancePopup />
              <DisabledTools><MergeIcon /><TrimIcon /><PatternIcon /></DisabledTools>
            </ToolColumn>
          </Body>
        </AppWindow>
      </Frame>
      <Watermark href="#">
        <svg width="60" height="62" viewBox="0 0 60 62" fill="none" aria-hidden="true">
          <path d="M39 38C40 24 26 6 12 5 0 5 1 16 8 26c6 8 18 14 30 15" stroke="#8fa1b1" strokeWidth="2" />
          <path d="M12 5C2 5 2 14 6 20M39 38C40 26 30 10 16 6" stroke="#7a90a4" strokeWidth="3" />
          <path d="M40 25c12-5 18 0 14 10-5 12-15 22-24 22-7 0-7-7-2-16" stroke="#c98a92" strokeWidth="2" />
          <path d="M52 24c6 4 3 14-4 22-6 8-14 12-20 10" stroke="#c98a92" strokeWidth="3" />
        </svg>
        <MarkText><strong>野火论坛</strong><span>www.proewildfire.cn</span></MarkText>
      </Watermark>
    </Desktop>
  );
}
